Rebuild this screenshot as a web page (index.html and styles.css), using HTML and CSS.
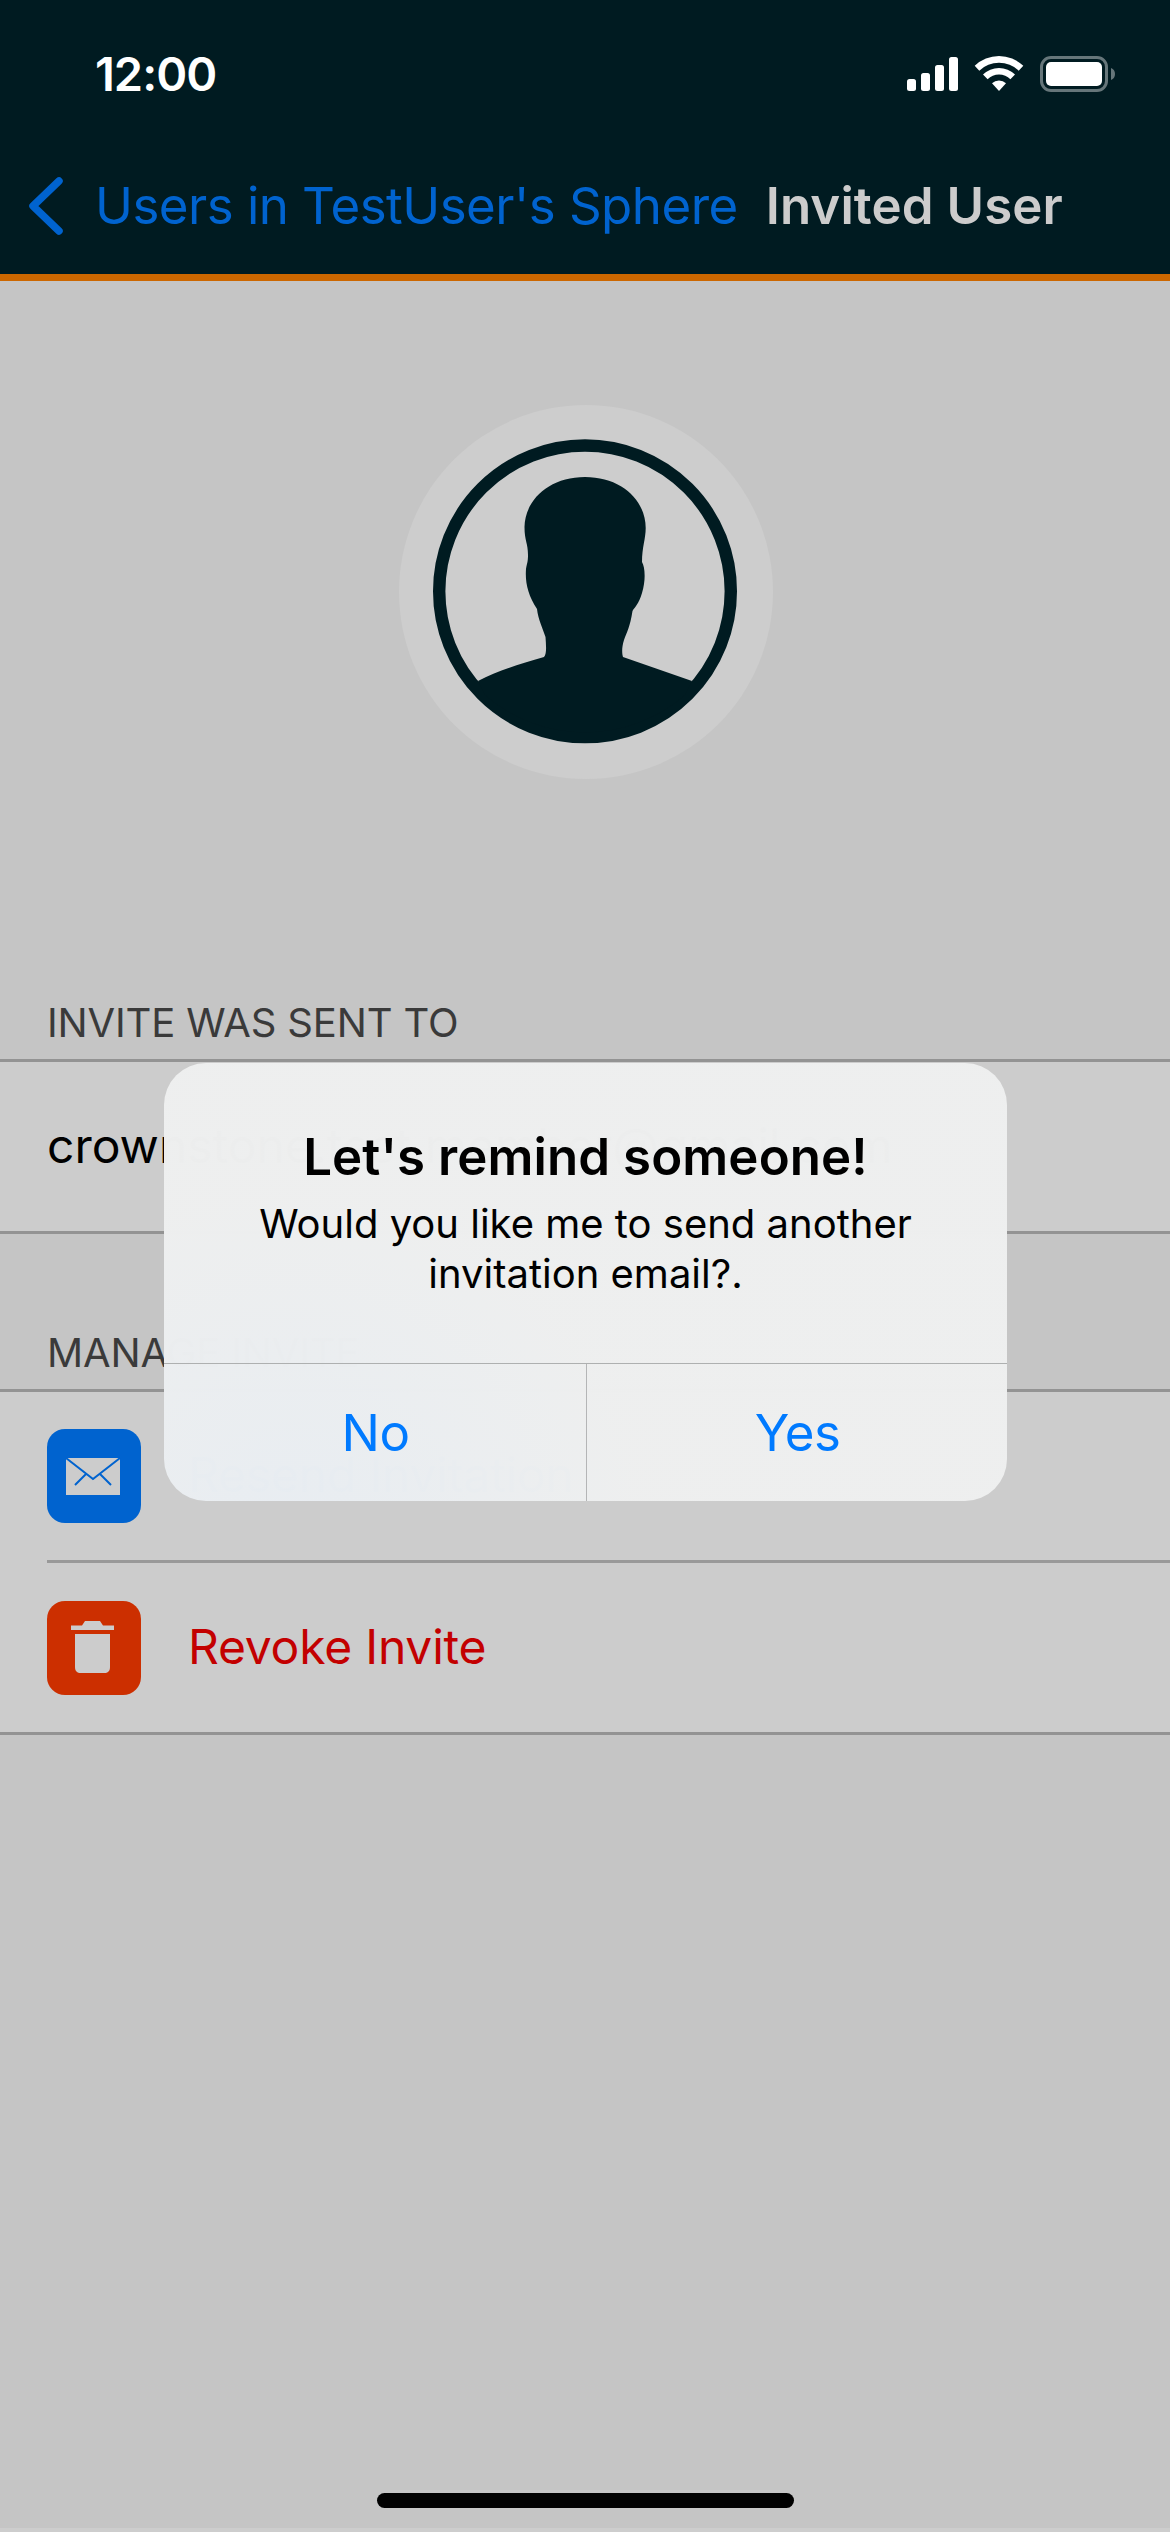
FILE: index.html
```html
<!DOCTYPE html>
<html lang="en">
<head>
<meta charset="utf-8">
<title>Invited User</title>
<link rel="stylesheet" href="styles.css">
</head>
<body>
<div class="screen">
  <header class="header">
    <div class="status">
      <span class="time">12:00</span>
      <svg class="status-icons" width="210" height="38" viewBox="0 0 210 38" fill="#fff">
        <rect x="0" y="24" width="9" height="12" rx="2.5"/>
        <rect x="14" y="18" width="9" height="18" rx="2.5"/>
        <rect x="28" y="10" width="9" height="26" rx="2.5"/>
        <rect x="42" y="2" width="9" height="34" rx="2.5"/>
        <path d="M92 36l-7-7.700a10 10 0 0 1 14 0z"/>
        <path d="M76 19.500a22.800 22.800 0 0 1 32 0l-4.600 4.800a16 16 0 0 0-22.800 0z"/>
        <path d="M67.700 10.800a35 35 0 0 1 48.600 0l-4.600 4.900a28.500 28.500 0 0 0-39.400 0z"/>
        <rect x="134.500" y="2.500" width="65" height="33" rx="9.500" fill="none" stroke="#66767a" stroke-width="3"/>
        <rect x="139" y="7" width="56" height="24" rx="5"/>
        <path d="M204 13a6.500 6.500 0 0 1 0 12z" fill="#66767a"/>
      </svg>
    </div>
    <nav class="nav">
      <svg class="chevron" width="34" height="58" viewBox="0 0 34 58"><path d="M30 4L4 29L30 54" fill="none" stroke="#0063cf" stroke-width="7.500" stroke-linecap="round" stroke-linejoin="round"/></svg>
      <span class="back">Users in TestUser's Sphere</span>
      <h1 class="title">Invited User</h1>
    </nav>
  </header>
  <main class="content">
    <div class="avatar">
      <svg width="374" height="374" viewBox="0 0 374 374">
        <circle cx="186" cy="186.300" r="145.800" fill="none" stroke="#001b21" stroke-width="12.400"/>
        <path fill="#001b21" d="M186 72C222 72 246.700 95 246.700 123C246.700 134 243 142 243 157C246 162 247 175 243 188C240 199 235 203 233.500 206C231 222 228 227 225 235C222.500 243 223 249 224 252L293 276L286 290A152 152 0 0 1 86 290L79 276C98 266 120 259 145 252C148 249 147 240 146.500 232C144 224 139 214 138 204C129 190 126 178 127 164C128 158 129 157 129 150C129 138 125.500 136 125.500 122C126 95 150 72 186 72Z"/>
      </svg>
    </div>
    <h2 class="label">INVITE WAS SENT TO</h2>
    <div class="group"><div class="row tall email">crownstone.test.member@gmail.com</div></div>
    <h2 class="label second">MANAGE INVITE</h2>
    <div class="group">
      <div class="row">
        <span class="tile blue"><svg width="94" height="94" viewBox="0 0 94 94"><rect x="19" y="29" width="54" height="37" fill="#ccc"/><path d="M19 29L46 50L73 29M39 45L28 56M53 45L64 56" fill="none" stroke="#0063cf" stroke-width="2"/></svg></span>
        <span class="row-text resend">Resend Invitation</span>
      </div>
      <div class="divider"></div>
      <div class="row tall">
        <span class="tile red"><svg width="94" height="94" viewBox="0 0 94 94" fill="#ccc"><path d="M24 24.500H35L38 20H53L56 24.500H67V29H24ZM28 33H63V66C63 70 61 72 57 72H34C30 72 28 70 28 66Z"/></svg></span>
        <span class="row-text revoke">Revoke Invite</span>
      </div>
    </div>
  </main>
  <section class="dialog">
    <div class="message">
      <h3 class="question">Let's remind someone!</h3>
      <p class="text">Would you like me to send another<br>invitation email?.</p>
    </div>
    <div class="actions"><span class="action">No</span><span class="action">Yes</span></div>
  </section>
  <div class="home"></div>
</div>
</body>
</html>
```
FILE: styles.css
```css
* { box-sizing: border-box; }
body { margin: 0; font-family: Inter, "Liberation Sans", sans-serif; }
h1, h2, h3, p { margin: 0; font-weight: 400; }
svg { display: block; flex: none; }
.screen { position: relative; width: 1170px; height: 2532px; overflow: hidden; background: #c5c5c5; border-bottom: 4px solid #cdcdcd; }
.header { height: 281px; background: #001b21; border-bottom: 7px solid #cc6700; box-shadow: inset 0 0 0 #b35c04; }
.status { display: flex; justify-content: space-between; align-items: flex-start; height: 132px; padding: 55px 53px 0 95px; }
.time { font-size: 47px; line-height: 38px; font-weight: 600; letter-spacing: -1px; color: #fff; }
.nav { display: flex; align-items: center; height: 148px; padding-left: 29px; white-space: nowrap; }
.back { margin-left: 32px; font-size: 51px; line-height: 60px; letter-spacing: -0.53px; color: #0063cf; }
.title { margin-left: 28px; font-size: 51px; line-height: 60px; font-weight: 600; letter-spacing: 0.1px; color: #ccc; }
.content { display: flex; flex-direction: column; }
.avatar { width: 374px; height: 374px; margin: 124px auto 0 399px; border-radius: 50%; background: #cdcdcd; }
.label { height: 280px; padding: 219px 47px 0; font-size: 40px; line-height: 50px; letter-spacing: -0.15px; color: #3a3a3a; }
.label.second { height: 155px; padding-top: 94px; }
.group { border-top: 3px solid #939393; border-bottom: 3px solid #939393; background: #ccc; }
.row { display: flex; align-items: center; height: 168px; padding-left: 47px; font-size: 48px; color: #000; }
.row.tall { height: 169px; }
.email { padding-bottom: 2px; }
.divider { height: 3px; margin-left: 47px; background: #999; }
.tile { width: 94px; height: 94px; border-radius: 18px; }
.blue { background: #0063cf; }
.red { background: #cc2f00; }
.row-text { margin-left: 47px; padding-bottom: 3px; letter-spacing: -0.22px; }
.resend { color: #0063cf; }
.revoke { color: #c30000; }
.dialog { position: absolute; left: 164px; top: 1063px; width: 843px; height: 438px; overflow: hidden; border-radius: 42px; background: radial-gradient(circle at 15% 110%, rgba(232, 237, 242, 0.994), rgba(238, 239, 239, 0.994) 40%); color: #000; text-align: center; }
.message { height: 300px; padding-top: 64px; }
.question { font-size: 51px; line-height: 60px; font-weight: 600; letter-spacing: 0.1px; }
.text { margin-top: 12px; font-size: 40px; line-height: 50px; }
.actions { display: grid; grid-template-columns: 422px 1fr; height: 138px; border-top: 1px solid #aeb0b0; }
.action { padding-left: 1px; font-size: 51px; line-height: 138px; letter-spacing: -0.6px; color: #007aff; }
.action + .action { border-left: 1px solid #b4b5b6; }
.home { position: absolute; left: 377px; top: 2493px; width: 417px; height: 15px; border-radius: 8px; background: #000; }
```
